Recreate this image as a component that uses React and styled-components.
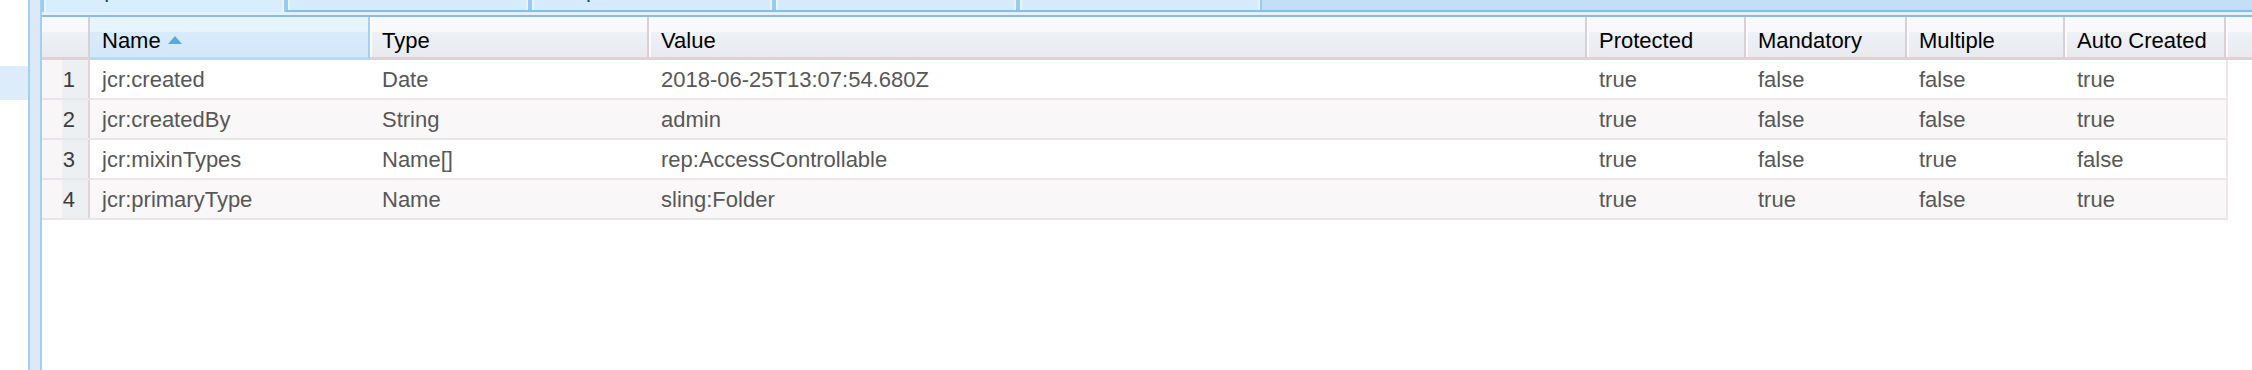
import React from 'react';
import styled, { createGlobalStyle } from 'styled-components';

const columns = [
  { key: 'name', label: 'Name', w: 280, sorted: true },
  { key: 'type', label: 'Type', w: 279 },
  { key: 'value', label: 'Value', w: 938 },
  { key: 'protected', label: 'Protected', w: 159 },
  { key: 'mandatory', label: 'Mandatory', w: 161 },
  { key: 'multiple', label: 'Multiple', w: 158 },
  { key: 'autoCreated', label: 'Auto Created', w: 161 },
];

const rows = [
  {
    name: 'jcr:created', type: 'Date', value: '2018-06-25T13:07:54.680Z',
    protected: 'true', mandatory: 'false', multiple: 'false', autoCreated: 'true',
  },
  {
    name: 'jcr:createdBy', type: 'String', value: 'admin',
    protected: 'true', mandatory: 'false', multiple: 'false', autoCreated: 'true',
  },
  {
    name: 'jcr:mixinTypes', type: 'Name[]', value: 'rep:AccessControllable',
    protected: 'true', mandatory: 'false', multiple: 'true', autoCreated: 'false',
  },
  {
    name: 'jcr:primaryType', type: 'Name', value: 'sling:Folder',
    protected: 'true', mandatory: 'true', multiple: 'false', autoCreated: 'true',
  },
];

const tabs = ['Properties', 'Access Control', 'Replication', 'Console', 'Build Info'];

const RowNumWidth = 48;

const App = () => (
  <>
    <GlobalStyle />
    <Page>
      <TreePane>
        <TreeRow $selected />
      </TreePane>
      <Splitter />
      <Panel>
        <TabBar>
          <TabRow>
            {tabs.map((t, i) => (
              <Tab key={t} $active={i === 0}>
                <TabLabel>{t}</TabLabel>
              </Tab>
            ))}
          </TabRow>
        </TabBar>
        <Grid>
          <HeaderRow>
            <HeaderCell $w={RowNumWidth} $plain />
            {columns.map((c) => (
              <HeaderCell key={c.key} $w={c.w} $active={c.sorted}>
                {c.label}
                {c.sorted && (
                  <SortArrow width="14" height="8" viewBox="0 0 14 8">
                    <polygon points="0,8 7,0 14,8" fill="#5ba7e0" />
                  </SortArrow>
                )}
              </HeaderCell>
            ))}
            <HeaderFiller />
          </HeaderRow>
          <Body>
            {rows.map((r, i) => (
              <Row key={r.name} $alt={i % 2 === 1}>
                <RowNum>{i + 1}</RowNum>
                {columns.map((c) => (
                  <Cell key={c.key} $w={c.w}>{r[c.key]}</Cell>
                ))}
              </Row>
            ))}
          </Body>
        </Grid>
      </Panel>
    </Page>
  </>
);

const GlobalStyle = createGlobalStyle`
  *, *::before, *::after {
    box-sizing: border-box;
  }
  body {
    margin: 0;
    background: #fff;
    font-family: "Liberation Sans", Arial, Helvetica, sans-serif;
  }
`;

const Page = styled.div`
  display: flex;
  width: 2252px;
  height: 370px;
  overflow: hidden;
  background: #fff;
`;

const TreePane = styled.div`
  flex: none;
  width: 28px;
  padding-top: 66px;
`;

const TreeRow = styled.div`
  height: 34px;
  background: ${(p) => (p.$selected ? '#dcecfb' : 'transparent')};
`;

const Splitter = styled.div`
  flex: none;
  width: 14px;
  background: #dce9f8;
  border-left: 2px solid #a3cff1;
  border-right: 2px solid #a3cff1;
`;

const Panel = styled.div`
  flex: 1;
  min-width: 0;
  display: flex;
  flex-direction: column;
`;

const TabBar = styled.div`
  flex: none;
  height: 17px;
  background: #e3f1fd;
  border-bottom: 2px solid #86bde8;
`;

const TabRow = styled.div`
  display: flex;
  align-items: flex-start;
  height: 12px;
  background: linear-gradient(to bottom, #c4dff5 10px, #86bde8 10px);
`;

const Tab = styled.div`
  flex: none;
  width: 244px;
  height: ${(p) => (p.$active ? 12 : 10)}px;
  display: flex;
  align-items: flex-end;
  overflow: hidden;
  padding: 0 0 ${(p) => (p.$active ? 11 : 9)}px 26px;
  background: ${(p) => (p.$active ? '#d9eefc' : '#d6ebfb')};
  border-left: 2px solid #9ccaef;
  border-right: 2px solid #9ccaef;
  box-shadow: inset 2px 0 0 #e6f4fe, inset -2px 0 0 #e6f4fe;
`;

const TabLabel = styled.span`
  font-size: 22px;
  line-height: 22px;
  color: #15428b;
  white-space: nowrap;
`;

const Grid = styled.div`
  flex: 1;
  display: flex;
  flex-direction: column;
  background: #fff;
`;

const HeaderRow = styled.div`
  flex: none;
  display: flex;
  height: 43px;
`;

const headerBg = 'linear-gradient(to bottom, #f9f9f9 0, #f9f9f9 15px, #eef1f6 15px, #e8eaee 40px)';
const activeBg = 'linear-gradient(to bottom, #e6f4fe 0, #e6f4fe 15px, #d8ebfb 15px, #d2e7f9 40px)';

const HeaderCell = styled.div`
  flex: none;
  width: ${(p) => p.$w}px;
  height: 43px;
  padding: 7px 0 0 12px;
  font-size: 22px;
  line-height: 33px;
  color: #000;
  white-space: nowrap;
  overflow: hidden;
  background: ${(p) => (p.$active ? activeBg : headerBg)};
  border-bottom: 3px solid ${(p) => (p.$active ? '#b8daf5' : '#ded2d7')};
  border-right: 2px solid ${(p) => (p.$active ? '#a6d0f2' : '#dbcfd4')};
  box-shadow: ${(p) => (p.$plain || p.$active ? 'none' : 'inset 2px 0 0 #fbfbfb')};
`;

const HeaderFiller = styled.div`
  flex: 1;
  height: 43px;
  background: ${headerBg};
  border-bottom: 3px solid #ded2d7;
  box-shadow: inset 2px 0 0 #fbfbfb;
`;

const SortArrow = styled.svg`
  margin-left: 7px;
  vertical-align: 4px;
`;

const Body = styled.div`
  display: flex;
  flex-direction: column;
`;

const Row = styled.div`
  display: flex;
  width: 2186px;
  height: 40px;
  background: ${(p) => (p.$alt ? '#f9f7f8' : '#fff')};
  border-bottom: 2px solid #ece4e8;
  border-right: 2px solid #efe8eb;
`;

const RowNum = styled.div`
  flex: none;
  width: ${RowNumWidth}px;
  padding: 2px 13px 0 0;
  text-align: right;
  font-size: 22px;
  line-height: 36px;
  color: #3c3c3c;
  background: linear-gradient(to right, #f8f6f7 20px, #edf0f3 20px);
  border-right: 2px solid #e0d4d8;
`;

const Cell = styled.div`
  flex: none;
  width: ${(p) => p.$w}px;
  padding: 2px 0 0 12px;
  font-size: 22px;
  line-height: 36px;
  color: #575757;
  white-space: nowrap;
  overflow: hidden;
`;

export default App;
